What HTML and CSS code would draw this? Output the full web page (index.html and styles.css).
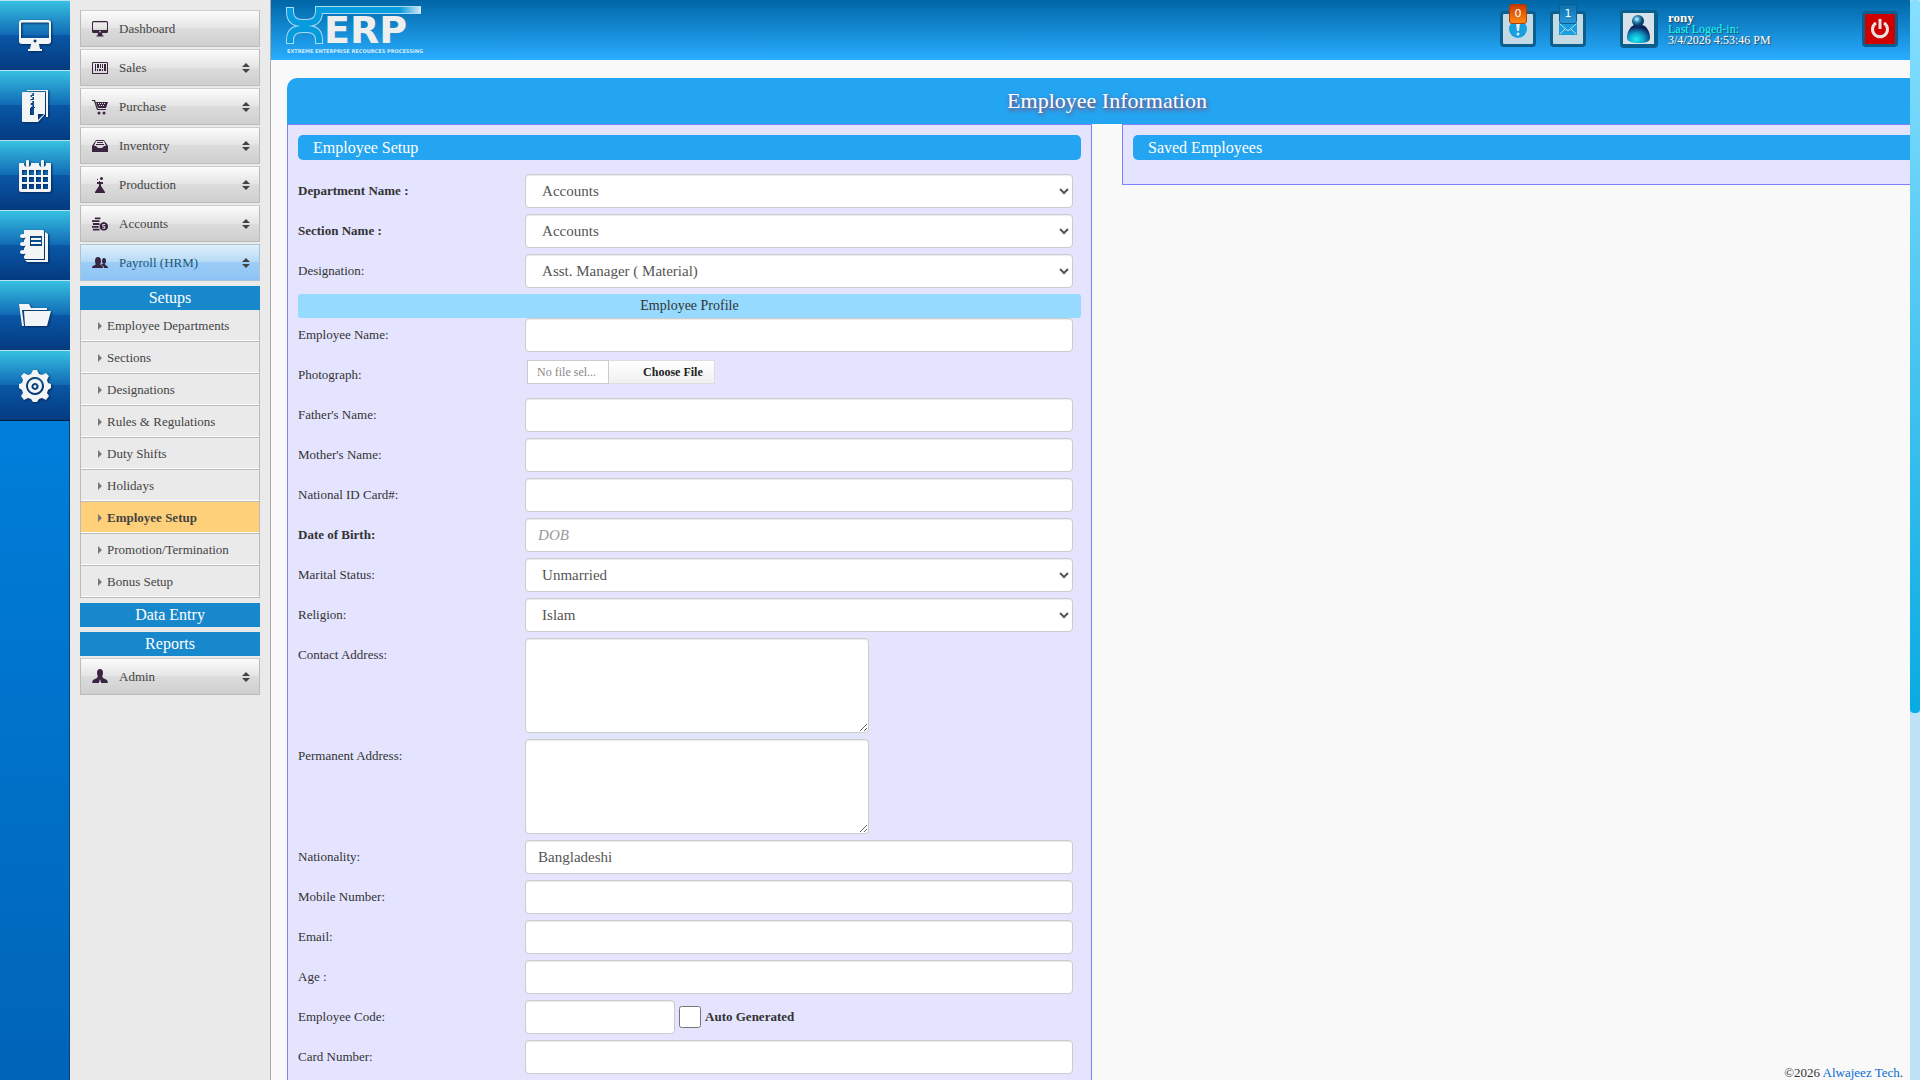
FILE: index.html
```html
<!DOCTYPE html>
<html lang="en">
<head>
<meta charset="utf-8">
<title>Employee Information</title>
<link rel="stylesheet" href="styles.css">
</head>
<body>
<svg class="defs" width="0" height="0" aria-hidden="true">
  <symbol id="i-monitor" viewBox="0 0 32 32"><path fill-rule="evenodd" d="M3 0h26a3 3 0 0 1 3 3v18a3 3 0 0 1-3 3h-9l1 5h2v2H9v-2h2l1-5H3a3 3 0 0 1-3-3V3a3 3 0 0 1 3-3zm0 2.500a1 1 0 0 0-1 1V18h28V3.500a1 1 0 0 0-1-1zM16 19.500a1.500 1.500 0 1 0 .1 0z"/></symbol>
  <symbol id="i-arrows" viewBox="0 0 8 10"><path d="M4 0l4 4H0zM4 10L0 6h8z"/></symbol>
</svg>
<div class="app">
  <nav class="rail" aria-label="Shortcuts">
    <a href="#" aria-label="Desktop"><svg width="32" height="32"><use href="#i-monitor"/></svg></a>
    <a href="#" aria-label="Archive"><svg width="32" height="32" viewBox="0 0 32 32"><path d="M8 0h21v27h-2V1H8z"/><path fill-rule="evenodd" d="M4 2h7l3 2-3 2 3 2-3 2 3 2-3 2 3 2-2 1v1h4V2h10v22l-7 8H4a1 1 0 0 1-1-1V3a1 1 0 0 1 1-1zm7 16v7h4v-7zm8 12l6-6h-6z"/><path d="M12 2h3v1h-3zM13 6h3v1h-3zM12 10h3v1h-3zM15 2h4v15h-4z"/></svg></a>
    <a href="#" aria-label="Calendar"><svg width="32" height="32" viewBox="0 0 32 32"><path fill-rule="evenodd" d="M1 3h4v2a4 4 0 0 0 7 0V3h8v2a4 4 0 0 0 7 0V3h4a1 1 0 0 1 1 1v26a2 2 0 0 1-2 2H2a2 2 0 0 1-2-2V4a1 1 0 0 1 1-1zm2 7v5h5v-5zm7 0v5h5v-5zm7 0v5h5v-5zm7 0v5h5v-5zM3 17v5h5v-5zm7 0v5h5v-5zm7 0v5h5v-5zm7 0v5h5v-5zM3 24v5h5v-5zm7 0v5h5v-5zm7 0v5h5v-5zm7 0v5h5v-5z"/><rect x="7" width="3" height="7" rx="1"/><rect x="22" width="3" height="7" rx="1"/></svg></a>
    <a href="#" aria-label="Notebook"><svg width="32" height="32" viewBox="0 0 32 32"><path fill-rule="evenodd" d="M5 0h19l1 1v28H6l-1-1v-2a3 3 0 0 0 0-5v-3a3 3 0 0 0 0-5v-3a3 3 0 0 0 0-5V1zm6 6v10h12V6z"/><path d="M12 8h10v2H12zm0 4h10v2H12zM26 2l3 2v28H8l-2-2h20z"/><ellipse cx="4" cy="6" rx="3" ry="2"/><ellipse cx="4" cy="14" rx="3" ry="2"/><ellipse cx="4" cy="22" rx="3" ry="2"/></svg></a>
    <a href="#" aria-label="Folder"><svg width="32" height="32" viewBox="0 0 32 32"><path d="M0 4h10l2 4h16v2H3l2 16H3z"/><path d="M5 11h27l-4 15H6z"/></svg></a>
    <a href="#" aria-label="Settings"><svg width="32" height="32" viewBox="0 0 32 32"><path fill-rule="evenodd" d="M14 0h4l2 4 3 1 4-2 3 3-2 4 1 3 3 1v4l-3 2-1 3 2 3-3 4-4-2-3 1-2 3h-4l-2-3-3-1-4 2-3-4 2-3-1-3-3-2v-4l3-1 1-3-2-4 3-3 4 2 3-1zM16 7a9 9 0 1 0 .1 0zm0 2a7 7 0 1 1-.1 0zm0 4a3.500 3.500 0 1 0 .1 0zm0 2a1.500 1.500 0 1 1-.1 0z"/></svg></a>
  </nav>

  <aside class="sidebar">
    <a class="item" href="#"><svg width="16" height="16"><use href="#i-monitor"/></svg><span>Dashboard</span></a>
    <a class="item" href="#"><svg width="16" height="16" viewBox="0 0 16 16"><path fill-rule="evenodd" d="M1 2h14a1 1 0 0 1 1 1v11H0V3a1 1 0 0 1 1-1zm0 1v10h14V3z"/><path d="M3 4h1v7H3zm2 0h2v4H5zm3 0h1v4H8zm2 0h1v4h-1zm2 0h2v7h-2zM5 9h1v2H5zm2 0h2v2H7zm3 0h1v2h-1z"/></svg><span>Sales</span><svg class="arrows" width="8" height="10"><use href="#i-arrows"/></svg></a>
    <a class="item" href="#"><svg width="16" height="16" viewBox="0 0 16 16"><path d="M0 1h3l3 9h8v1H5L2 2H0z"/><path fill-rule="evenodd" d="M4 3h12l-2 6H6zm2 1v1h1V4zm2 0v1h1V4zm2 0v1h1V4zm2 0v1h1V4zM7 6v1h1V6zm2 0v1h1V6zm2 0v1h1V6z"/><circle cx="7" cy="14" r="1.500"/><circle cx="12" cy="14" r="1.500"/></svg><span>Purchase</span><svg class="arrows" width="8" height="10"><use href="#i-arrows"/></svg></a>
    <a class="item" href="#"><svg width="16" height="16" viewBox="0 0 16 16"><path fill-rule="evenodd" d="M4 2h8l4 6v6H0V8zm0 1L2 8h2l2 2h4l2-2h2l-2-5z"/><path d="M5 4h6v1H5zM4 6h8v1H4z"/></svg><span>Inventory</span><svg class="arrows" width="8" height="10"><use href="#i-arrows"/></svg></a>
    <a class="item" href="#"><svg width="16" height="16" viewBox="0 0 16 16"><path d="M5 5h6v2H9v2l4 6v1H3v-1l4-6V7H5zM5 2h1v1H5zm2 2h1v1H7z"/><circle cx="9.500" cy="1.500" r="1.500"/></svg><span>Production</span><svg class="arrows" width="8" height="10"><use href="#i-arrows"/></svg></a>
    <a class="item" href="#"><svg width="17" height="16" viewBox="0 0 17 16"><path d="M3 1h6v2H3zM0 4h8v2H0zm1 3h7v2H1zm-1 3h7v2H0zm1 3h7v2H1z"/><path fill-rule="evenodd" d="M12.500 6a4.500 4.500 0 1 0 .1 0zm1.500 3v-1h-3v3h2v1h-2v1h3v-3h-2v-1z"/></svg><span>Accounts</span><svg class="arrows" width="8" height="10"><use href="#i-arrows"/></svg></a>
    <a class="item current" href="#"><svg width="16" height="16" viewBox="0 0 16 16"><ellipse cx="6" cy="6" rx="3" ry="4"/><ellipse cx="12" cy="6" rx="2" ry="3"/><path d="M0 13c0-3 3-2 4-4h4c1 2 3 1 3 4zM10 9h3c0 2 3 1 3 4h-4c0-2-1-2-3-3z"/></svg><span>Payroll (HRM)</span><svg class="arrows" width="8" height="10"><use href="#i-arrows"/></svg></a>

    <h2 class="group">Setups</h2>
    <ul class="submenu">
      <li><a href="#">Employee Departments</a></li>
      <li><a href="#">Sections</a></li>
      <li><a href="#">Designations</a></li>
      <li><a href="#">Rules &amp; Regulations</a></li>
      <li><a href="#">Duty Shifts</a></li>
      <li><a href="#">Holidays</a></li>
      <li class="active"><a href="#">Employee Setup</a></li>
      <li><a href="#">Promotion/Termination</a></li>
      <li><a href="#">Bonus Setup</a></li>
    </ul>
    <h2 class="group">Data Entry</h2>
    <h2 class="group">Reports</h2>
    <a class="item" href="#"><svg width="16" height="16" viewBox="0 0 16 16"><ellipse cx="8" cy="4" rx="3" ry="4"/><path d="M6 7h4l1 2 4 2 1 3H0l1-3 4-2z"/><path class="tie" d="M8 10l1 4-1 2-1-2z"/></svg><span>Admin</span><svg class="arrows" width="8" height="10"><use href="#i-arrows"/></svg></a>
  </aside>

  <div class="page">
    <header class="topbar">
      <svg class="logo" width="144" height="50" viewBox="0 0 144 50" role="img" aria-label="XERP">
        <defs><linearGradient id="bar"><stop offset=".8" stop-color="#069bdd"/><stop offset="1" stop-color="#d9e9f3"/></linearGradient></defs>
        <path fill="none" stroke-width="8" stroke="#a9dbf3" d="M4 3v4q0 12 12 12h5q12 0 12-12V6h102M4 40v-4q0-11 12-11h5q12 0 12 11v4"/>
        <path fill="none" stroke="#069bdd" stroke-width="6" d="M4 4v3q0 12 12 12h5q12 0 12-12V6h1M4 39v-3q0-11 12-11h5q12 0 12 11v3M14 22h9"/>
        <rect x="30" y="3" width="105" height="6" fill="url(#bar)"/>
        <text x="38" y="39" class="wordmark">ERP</text>
        <text x="1" y="49" class="tagline">EXTREME ENTERPRISE RECOURCES PROCESSING</text>
      </svg>
      <div class="tools">
        <button class="tile" aria-label="Alerts"><span class="badge hot">0</span><svg width="18" height="18" viewBox="0 0 18 18"><circle cx="9" cy="9" r="9" fill="#199fe0"/><path d="M7 3h4l-1 8H8z" fill="#e0edf4"/><circle cx="9" cy="14" r="1.500" fill="#e0edf4"/></svg></button>
        <button class="tile" aria-label="Messages"><span class="badge">1</span><svg width="18" height="18" viewBox="0 0 18 18"><path d="M0 3h18v12H0z" fill="#199fe0"/><path d="M1 4l8 7 8-7M1 14l5-5M17 14l-5-5" fill="none" stroke="#c3dbe6"/></svg></button>
      </div>
      <div class="user">
        <svg class="avatar" width="38" height="38" viewBox="0 0 38 38" role="img" aria-label="User photo">
          <defs>
            <radialGradient id="head" cx=".4" cy=".35"><stop stop-color="#d5fbff"/><stop offset=".5" stop-color="#2f8fc0"/><stop offset="1" stop-color="#073a66"/></radialGradient>
            <radialGradient id="torso" cx=".4" cy=".8" r=".7"><stop stop-color="#19f0f0"/><stop offset=".5" stop-color="#0e9fc8"/><stop offset="1" stop-color="#0b1f5c"/></radialGradient>
          </defs>
          <rect width="38" height="38" rx="4" fill="#0b5f8e"/><rect x="3" y="3" width="31" height="31" fill="#d5e2ea"/>
          <path d="M7 28c0-6 3-12 8-13h7c5 1 8 7 8 13 0 4-5 5-11 5S7 32 7 28z" fill="url(#torso)"/><circle cx="18" cy="11" r="6" fill="url(#head)"/>
        </svg>
        <p><b>rony</b><br><span>Last Loged-in:</span><br>3/4/2026 4:53:46 PM</p>
      </div>
      <button class="tile power" aria-label="Log out"><svg width="20" height="20" viewBox="0 0 20 20" fill="none" stroke="#e4e4e4"><path d="M6 4a7.500 7.500 0 1 0 8 0" stroke-width="3"/><path d="M10 0v10" stroke-width="3"/></svg></button>
    </header>

    <main>
      <h1>Employee Information</h1>
      <div class="columns">
        <section class="panel">
          <h2 class="bar">Employee Setup</h2>
          <form>
            <div class="row"><label class="req" for="dept">Department Name :</label><select id="dept"><option>Accounts</option></select></div>
            <div class="row"><label class="req" for="section">Section Name :</label><select id="section"><option>Accounts</option></select></div>
            <div class="row"><label for="desig">Designation:</label><select id="desig"><option>Asst. Manager ( Material)</option></select></div>
            <h3>Employee Profile</h3>
            <div class="row"><label for="name">Employee Name:</label><input type="text" id="name"></div>
            <div class="row"><label for="photo">Photograph:</label>
              <div class="upload"><span class="filename">No file sel...</span><span class="choose">Choose File</span><input type="file" id="photo"></div></div>
            <div class="row"><label for="father">Father's Name:</label><input type="text" id="father"></div>
            <div class="row"><label for="mother">Mother's Name:</label><input type="text" id="mother"></div>
            <div class="row"><label for="nid">National ID Card#:</label><input type="text" id="nid"></div>
            <div class="row"><label class="req" for="dob">Date of Birth:</label><input type="text" id="dob" placeholder="DOB"></div>
            <div class="row"><label for="marital">Marital Status:</label><select id="marital"><option>Unmarried</option></select></div>
            <div class="row"><label for="religion">Religion:</label><select id="religion"><option>Islam</option></select></div>
            <div class="row"><label for="contact">Contact Address:</label><textarea id="contact"></textarea></div>
            <div class="row"><label for="permanent">Permanent Address:</label><textarea id="permanent"></textarea></div>
            <div class="row"><label for="nation">Nationality:</label><input type="text" id="nation" value="Bangladeshi"></div>
            <div class="row"><label for="mobile">Mobile Number:</label><input type="text" id="mobile"></div>
            <div class="row"><label for="email">Email:</label><input type="text" id="email"></div>
            <div class="row"><label for="age">Age :</label><input type="text" id="age"></div>
            <div class="row"><label for="code">Employee Code:</label>
              <div class="code"><input type="text" id="code"><input type="checkbox" id="auto"><label class="req" for="auto">Auto Generated</label></div></div>
            <div class="row"><label for="card">Card Number:</label><input type="text" id="card"></div>
          </form>
        </section>
        <section class="panel">
          <h2 class="bar">Saved Employees</h2>
        </section>
      </div>
    </main>
    <footer>©2026 <a href="#">Alwajeez Tech</a>.</footer>
  </div>
  <div class="scrolltrack" aria-hidden="true"><div class="thumb"></div></div>
</div>
</body>
</html>
```
FILE: styles.css
```css
* { box-sizing: border-box; }
body {
  margin: 0;
  color: #333;
  background: #f9f9f9;
  font: 13px/18px "Palatino Linotype", "Book Antiqua", "Liberation Serif", serif;
}
h1, h2, h3, p, ul { margin: 0; padding: 0; font-weight: normal; }
a { text-decoration: none; }
button, input, select, textarea { font: inherit; color: #555; }
.defs { position: absolute; }
.app { display: flex; height: 100vh; overflow: hidden; }

/* shortcut rail */
.rail {
  flex: 0 0 70px;
  background: linear-gradient(#0090f0, #0064b8);
  border-right: 1px solid #06437a;
}
.rail a {
  display: grid;
  place-items: center;
  height: 70px;
  margin-right: -1px;
  border-top: 1px solid #b5e3f3;
  background: linear-gradient(#37c0e2, #1069b4 50%, #0a57a6 50%, #043a80);
}
.rail a:last-child { box-shadow: 0 1px #021d3f; }
.rail svg { fill: #f2f4f6; filter: drop-shadow(1px 1px 1px #02285a); }

/* menu */
.sidebar {
  flex: 0 0 201px;
  padding: 10px;
  background: #eaeaea;
  border-right: 1px solid #aaa;
}
.item {
  display: flex;
  align-items: center;
  gap: 11px;
  height: 37px;
  margin-bottom: 2px;
  padding: 0 9px 0 11px;
  border: 1px solid #bbb;
  border-top-color: #ccc;
  background: linear-gradient(#fcfcfc, #e4e4e4 50%, #dcdcdc 50%, #cfcfcf);
  color: #444;
}
.item svg { flex: none; width: 16px; fill: #3a2440; }
.item span { flex: 1; }
.item .arrows { width: 8px; fill: #444; }
.item .tie { fill: #eee; }
.item.current {
  border-color: #a9c4d4;
  background: linear-gradient(#e0effa, #b4d9f5 50%, #9dcdf6 50%, #8cc3f6);
  color: #1c5878;
}
.group {
  margin: 5px 0;
  background: #1888cc;
  color: #fff;
  font-size: 16px;
  line-height: 24px;
  text-align: center;
}
.group + .item { margin-top: -3px; }
.submenu { margin-top: -5px; list-style: none; border: solid #bbb; border-width: 0 1px; }
.submenu a {
  display: flex;
  align-items: center;
  gap: 5px;
  height: 32px;
  padding-left: 17px;
  border-bottom: 1px solid #bbb;
  box-shadow: inset 0 -1px #fff;
  color: #444;
}
.submenu a::before { content: ""; border: solid transparent; border-width: 4px 0 4px 4px; border-left-color: #777; }
.submenu .active a { background: #ffd07a; font-weight: bold; }

/* page */
.page { flex: 1; min-width: 0; display: flex; flex-direction: column; position: relative; }
.topbar {
  flex: none;
  display: flex;
  align-items: center;
  height: 60px;
  padding: 0 12px 2px 15px;
  background: linear-gradient(#0066a6, #29adff);
}
.logo { overflow: visible; }
.wordmark { font: bold 38px "DejaVu Sans", sans-serif; fill: #eee; }
.tagline { font: bold 5px "DejaVu Sans", sans-serif; fill: #cfeafa; }
.tools { display: flex; gap: 14px; margin-left: auto; }
.tile {
  position: relative;
  display: grid;
  place-items: center;
  width: 36px;
  height: 36px;
  padding: 0;
  border: 3px solid #0b5f8e;
  border-radius: 4px;
  background: #c3d9e4;
}
.badge {
  position: absolute;
  top: -10px;
  left: 6px;
  width: 18px;
  height: 20px;
  border: 1px solid #0b5f96;
  border-radius: 3px;
  background: linear-gradient(#0b70ac, #2a97d8);
  color: #fff;
  font: 11px/18px "DejaVu Sans", sans-serif;
}
.badge.hot { border-color: #b23c00; background: linear-gradient(#cb3a00, #ff8a12); }
.user { display: flex; gap: 10px; width: 242px; margin-left: 34px; color: #fff; font-size: 12px; line-height: 11px; text-shadow: 1px 1px 1px #345; }
.user p { padding-top: 2px; }
.user b { font-size: 13px; }
.user span { color: #1ff; }
.tile.power { background: #d00000; }

main { flex: 1; min-height: 0; overflow: hidden; padding: 18px 0 0 16px; }
h1 {
  margin-right: -17px;
  border-radius: 10px 0 0;
  background: #23a5f1;
  color: #fff;
  font-size: 22px;
  line-height: 46px;
  text-align: center;
  text-shadow: 1px 2px 4px #a03050;
}
.columns { display: grid; grid-template-columns: 1fr 1fr; gap: 30px; align-items: start; margin-right: -17px; }
.panel { padding: 10px 10px 24px; border: 1px solid #8080ff; background: #e4e4ff; }
.bar { padding-left: 15px; border-radius: 5px; background: #23a5f1; color: #fff; font-size: 16px; line-height: 25px; }
form { padding-top: 14px; }
h3 { border-radius: 3px; background: #96daff; font-size: 14px; line-height: 24px; text-align: center; }
.row { display: grid; grid-template-columns: 29% 70%; margin-bottom: 6px; line-height: 34px; }
.req { font-weight: bold; }
select, input[type="text"], textarea {
  width: 100%;
  height: 34px;
  padding: 6px 12px;
  border: 1px solid #ccc;
  border-radius: 4px;
  background: #fff;
  box-shadow: inset 0 1px 1px rgba(0, 0, 0, .08);
  font-size: 15px;
  line-height: 20px;
}
select { padding: 6px 0 6px 12px; }
input::placeholder { color: #999; font-style: italic; }
textarea { display: block; width: 344px; height: 95px; }
.upload { position: relative; display: flex; width: 190px; height: 34px; padding: 2px 0 8px 2px; line-height: 22px; }
.upload input { position: absolute; inset: 0; width: 100%; opacity: 0; }
.filename { width: 82px; padding-left: 9px; border: 1px solid #ccc; background: #fff; color: #888; font-size: 12px; }
.choose { width: 106px; padding-left: 34px; border: 1px solid #ddd; border-left: 0; background: linear-gradient(#fff, #f0f0f0); color: #222; font-weight: bold; font-size: 12px; }
.code { display: flex; align-items: center; gap: 4px; }
.code input[type="text"] { width: 150px; }
.code input[type="checkbox"] { width: 22px; height: 22px; margin: 0; }

footer { position: absolute; right: 7px; bottom: 0; font-size: 13px; line-height: 15px; }
footer a { color: #0a6bd0; }

.scrolltrack { flex: 0 0 10px; background: #bfe3f6; }
.thumb { height: 66%; border-radius: 4px; background: linear-gradient(#87dfff, #08abe2); }
```
